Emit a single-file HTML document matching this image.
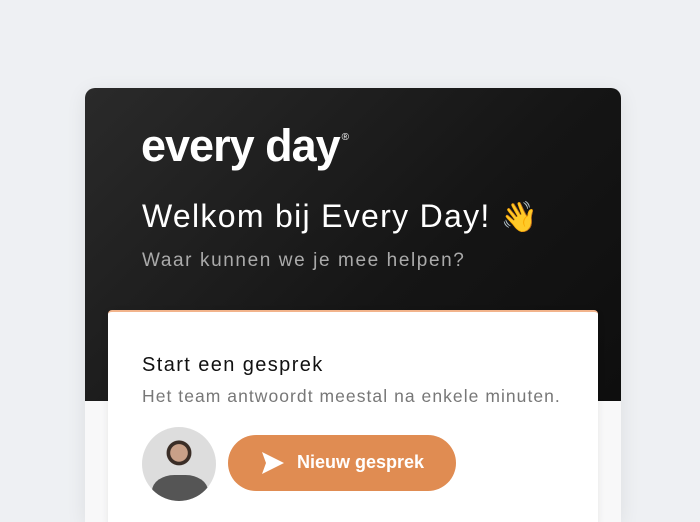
<!DOCTYPE html>
<html><head><meta charset="utf-8"><style>
html,body{margin:0;width:700px;height:522px;overflow:hidden}
body{background:#eef0f3;font-family:"Liberation Sans",sans-serif;position:relative}
.outer{position:absolute;left:85px;top:88px;width:536px;height:434px;background:#f8f8f9;border-radius:10px 10px 0 0;overflow:hidden;box-shadow:0 4px 20px rgba(0,0,0,.08)}
.hdr{position:absolute;left:0;top:0;width:536px;height:313px;background:linear-gradient(135deg,#2a2a2a,#151515 60%,#0e0e0e)}
.logo{position:absolute;left:56px;top:32px;color:#fff;font-size:45px;font-weight:bold;letter-spacing:-1px}
.logo sup{font-size:10px;font-weight:normal;vertical-align:top;position:relative;top:12px;left:2px;letter-spacing:0}
.h1{position:absolute;left:57px;top:110px;color:#fff;font-size:32px;letter-spacing:1.3px;white-space:nowrap}
.sub{position:absolute;left:57px;top:162px;color:#aaa;font-size:19px;letter-spacing:1.6px;white-space:nowrap}
.card{position:absolute;left:108px;top:310px;width:490px;height:212px;background:#fff;border-top:2px solid #f2b48c;border-radius:4px 4px 0 0;box-shadow:0 2px 8px rgba(0,0,0,.08)}
.t1{position:absolute;left:34px;top:42px;font-size:20px;color:#111;letter-spacing:1.4px;white-space:nowrap}
.t2{position:absolute;left:34px;top:74px;font-size:17.5px;color:#777;letter-spacing:1.05px;white-space:nowrap}
.av{position:absolute;left:34px;top:115px;width:74px;height:74px;border-radius:50%;background:radial-gradient(circle at 50% 35%,#c9a088 0 14%,#3a2d26 15% 20%,#ddd 21%);overflow:hidden}
.av:after{content:"";position:absolute;left:10px;top:48px;width:56px;height:40px;background:#555;border-radius:40% 40% 0 0}
.btn{position:absolute;left:120px;top:123px;width:228px;height:56px;background:#e08c52;border-radius:28px;color:#fff;font-size:18px;font-weight:bold}
.btn span{position:absolute;left:69px;top:17px}
</style></head><body>
<div class="outer"><div class="hdr">
<div class="logo">every day<sup>®</sup></div>
<div class="h1">Welkom bij Every Day! <span style="font-size:30px">👋</span></div>
<div class="sub">Waar kunnen we je mee helpen?</div>
</div></div>
<div class="card">
<div class="t1">Start een gesprek</div>
<div class="t2">Het team antwoordt meestal na enkele minuten.</div>
<div class="av"></div>
<div class="btn"><svg style="position:absolute;left:33px;top:16px" width="24" height="24" viewBox="0 0 24 24"><path d="M1 1 L23 12 L1 23 L5 12 Z" fill="#fff"/></svg><span>Nieuw gesprek</span></div>
</div>
</body></html>
